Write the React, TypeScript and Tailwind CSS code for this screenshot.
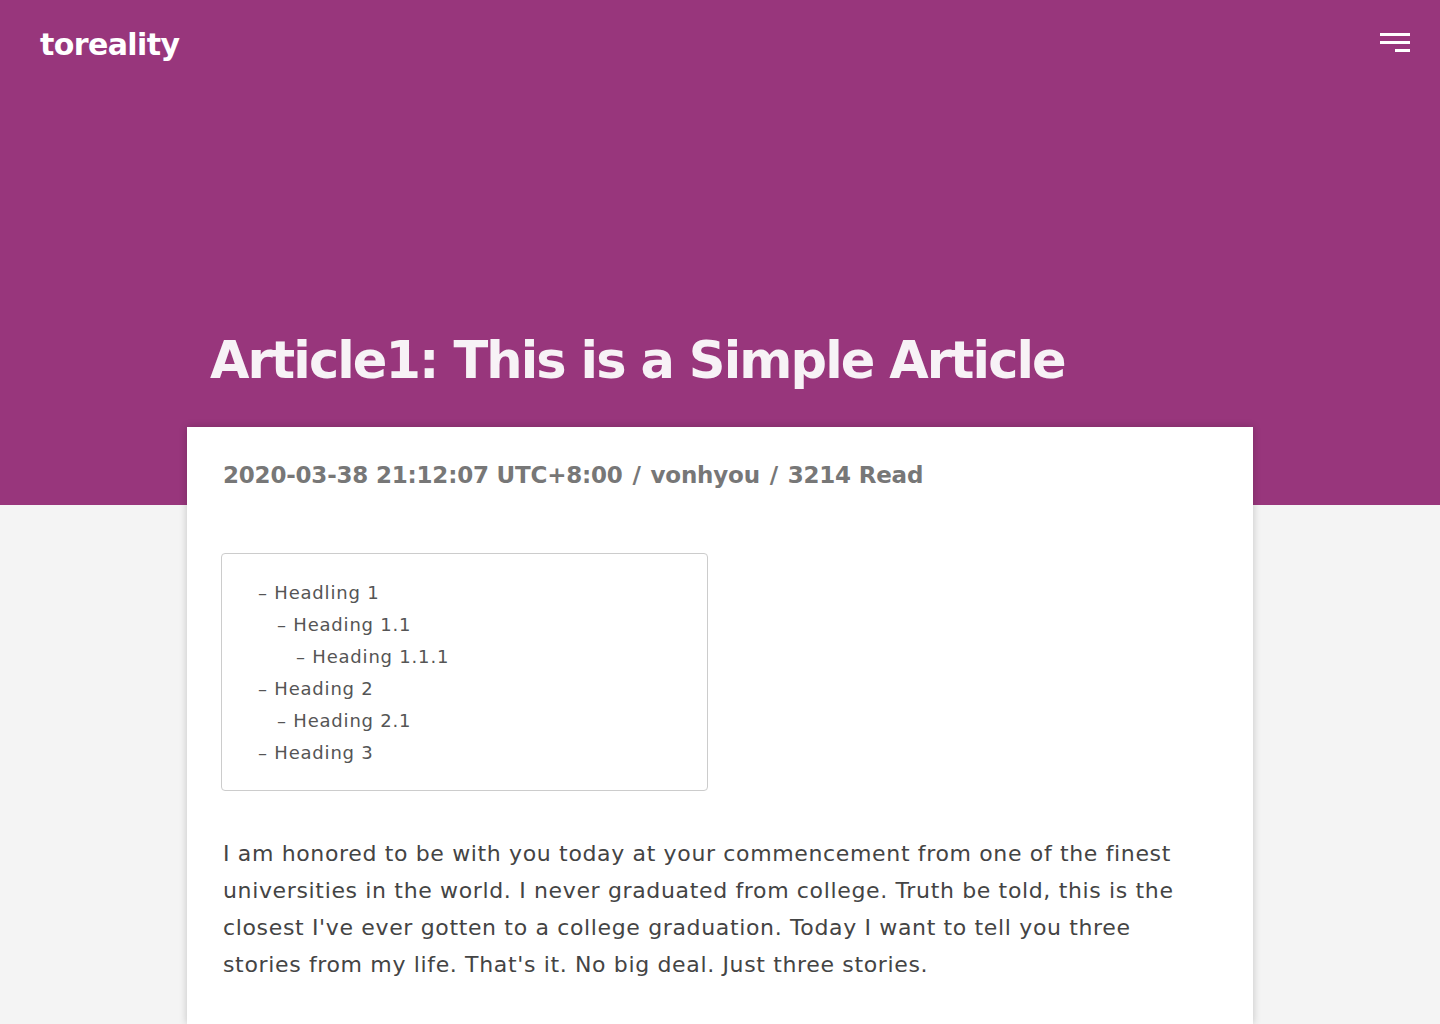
import React from 'react';

const toc = [
  { label: 'Headling 1', level: 0 },
  { label: 'Heading 1.1', level: 1 },
  { label: 'Heading 1.1.1', level: 2 },
  { label: 'Heading 2', level: 0 },
  { label: 'Heading 2.1', level: 1 },
  { label: 'Heading 3', level: 0 },
];

const indent = ['pl-0', 'pl-[19px]', 'pl-[38px]'];

export default function App() {
  return (
    <div className="min-h-[1024px] bg-[#f4f4f4] font-['DejaVu_Sans',sans-serif]">
      {/* Header */}
      <header className="h-[505px] bg-[#98367c] flex flex-col">
        <nav className="flex justify-between items-start pl-[40px] pr-[30px] pt-[26px]">
          <a className="text-white text-[30px] font-bold leading-[38px] tracking-[-0.6px]">toreality</a>
          <button className="flex flex-col items-end gap-[5px] mt-[7px]" aria-label="menu">
            <span className="block w-[30px] h-[3px] bg-white" />
            <span className="block w-[30px] h-[3px] bg-white" />
            <span className="block w-[15px] h-[3px] bg-white" />
          </button>
        </nav>
        <div className="flex-1" />
        <div className="w-[1066px] mx-auto pl-[23px] pb-[112px]">
          <h1 className="text-[#f7f2f6] text-[51px] font-bold leading-[64px] tracking-[-1.9px]">Article1: This is a Simple Article</h1>
        </div>
      </header>

      {/* Card */}
      <main className="w-[1066px] mx-auto -mt-[78px] bg-white shadow-[0_0_8px_rgba(0,0,0,0.2)] px-[36px] pt-[30px] pb-[40px] min-h-[597px]">
        <div className="text-[#777] text-[23px] font-bold leading-[36px] tracking-[-0.2px]">
          2020-03-38 21:12:07 UTC+8:00 <span className="mx-[2px]">/</span> vonhyou <span className="mx-[2px]">/</span> 3214 Read
        </div>

        <div className="mt-[60px] -ml-[2px] w-[487px] border border-[#ccc] rounded-[4px] pt-[23px] pb-[21px] pl-[36px]">
          <ul>
            {toc.map((t) => (
              <li key={t.label} className={`${indent[t.level]} text-[#555] text-[18px] leading-[32px] tracking-[0.8px]`}>
                – {t.label}
              </li>
            ))}
          </ul>
        </div>

        <p className="mt-[44px] max-w-[980px] text-[#444] text-[22px] leading-[37px] tracking-[0.65px]">
          I am honored to be with you today at your commencement from one of the finest universities in the world. I never graduated from college. Truth be told, this is the closest I've ever gotten to a college graduation. Today I want to tell you three stories from my life. That's it. No big deal. Just three stories.
        </p>
      </main>
    </div>
  );
}
